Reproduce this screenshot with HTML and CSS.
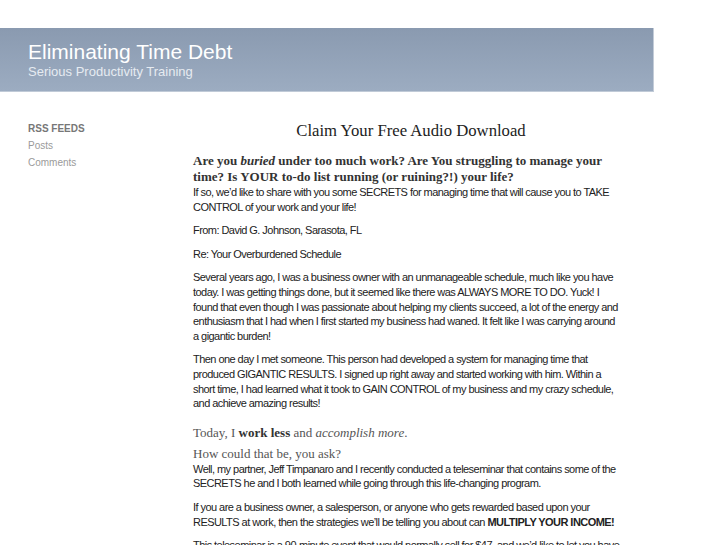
FILE: index.html
```html
<!DOCTYPE html>
<html>
<head>
<meta charset="utf-8">
<link rel="stylesheet" href="styles.css">
</head>
<body>
<div class="wrap">
  <div class="header">
    <div class="site-title">Eliminating Time Debt</div>
    <div class="site-desc">Serious Productivity Training</div>
  </div>
  <div class="main">
    <div class="sidebar">
      <div class="side-head">RSS FEEDS</div>
      <div class="side-link">Posts</div>
      <div class="side-link">Comments</div>
    </div>
    <div class="content">
      <h1 class="title">Claim Your Free Audio Download</h1>
      <h2 class="lead">Are you <em>buried</em> under too much work? Are You struggling to manage your time? Is YOUR to-do list running (or ruining?!) your life?</h2>
      <p class="first">If so, we’d like to share with you some SECRETS for managing time that will cause you to TAKE CONTROL of your work and your life!</p>
      <p>From: David G. Johnson, Sarasota, FL</p>
      <p>Re: Your Overburdened Schedule</p>
      <p>Several years ago, I was a business owner with an unmanageable schedule, much like you have today. I was getting things done, but it seemed like there was ALWAYS MORE TO DO. Yuck! I found that even though I was passionate about helping my clients succeed, a lot of the energy and enthusiasm that I had when I first started my business had waned. It felt like I was carrying around a gigantic burden!</p>
      <p>Then one day I met someone. This person had developed a system for managing time that produced GIGANTIC RESULTS. I signed up right away and started working with him. Within a short time, I had learned what it took to GAIN CONTROL of my business and my crazy schedule, and achieve amazing results!</p>
      <h3 class="sub">Today, I <strong>work less</strong> and <em>accomplish more</em>.</h3>
      <h3 class="sub tight">How could that be, you ask?</h3>
      <p class="first">Well, my partner, Jeff Timpanaro and I recently conducted a teleseminar that contains some of the SECRETS he and I both learned while going through this life-changing program.</p>
      <p>If you are a business owner, a salesperson, or anyone who gets rewarded based upon your RESULTS at work, then the strategies we’ll be telling you about can <strong>MULTIPLY YOUR INCOME!</strong></p>
      <p>This teleseminar is a 90-minute event that would normally sell for $47, and we’d like to let you have it absolutely free, with no strings attached.</p>
    </div>
  </div>
</div>
</body>
</html>
```

FILE: styles.css
```css
html, body {
  margin: 0;
  padding: 0;
  background: #fff;
}
body {
  font-family: "Liberation Sans", Arial, sans-serif;
  color: #222;
}
.wrap {
  width: 654px;
  padding-top: 28px;
}
.header {
  padding: 11px 0 0 28px;
  box-sizing: border-box;
  height: 64px;
  background: linear-gradient(#8a9ab0, #9cacc1);
  border-right: 1px solid #c3ccd8;
  border-bottom: 1px solid #c0cad7;
}
.site-title {
  font-size: 21px;
  color: #fff;
  line-height: 25px;
}
.site-desc {
  font-size: 13px;
  color: #e6ebf1;
  line-height: 16px;
  margin-top: 0;
}
.main {
  display: flex;
  padding-top: 28px;
}
.sidebar {
  width: 165px;
  padding-left: 28px;
  flex: none;
}
.side-head {
  font-size: 10px;
  font-weight: bold;
  color: #777;
  line-height: 17px;
}
.side-link {
  font-size: 10px;
  color: #9a9a9a;
  line-height: 17px;
}
.content {
  width: 428px;
  font-size: 11px;
  line-height: 14.6px;
  letter-spacing: -0.55px;
}
.title {
  font-family: "Liberation Serif", "Times New Roman", serif;
  font-weight: normal;
  font-size: 16.7px;
  letter-spacing: 0;
  text-align: center;
  color: #222;
  margin: 1px 0 12px;
  line-height: 20px;
  width: 436px;
}
.lead {
  font-family: "Liberation Serif", "Times New Roman", serif;
  font-size: 13px;
  font-weight: bold;
  letter-spacing: 0;
  line-height: 16px;
  color: #333;
  margin: 0;
  width: 436px;
}
.content p {
  margin: 9px 0 0;
}
.content p.first {
  margin-top: 0;
}
.sub {
  font-family: "Liberation Serif", "Times New Roman", serif;
  font-weight: normal;
  font-size: 13px;
  letter-spacing: 0;
  color: #555;
  line-height: 16px;
  margin: 14px 0 0;
}
.sub strong {
  color: #333;
}
.sub.tight {
  margin-top: 5px;
}
```
